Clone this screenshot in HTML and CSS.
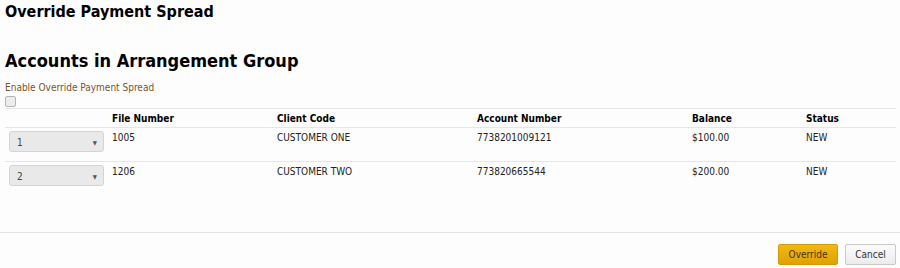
FILE: index.html
```html
<!DOCTYPE html>
<html>
<head>
<meta charset="utf-8">
<link rel="stylesheet" href="styles.css">
</head>
<body>
<div class="page">
  <h1 class="title">Override Payment Spread</h1>
  <h2 class="subtitle">Accounts in Arrangement Group</h2>
  <div class="label">Enable Override Payment Spread</div>
  <div class="check-row"><span class="checkbox"></span></div>
  <table class="grid">
    <thead>
      <tr>
        <th class="c-sel"></th>
        <th class="c-file">File Number</th>
        <th class="c-client">Client Code</th>
        <th class="c-acct">Account Number</th>
        <th class="c-bal">Balance</th>
        <th class="c-status">Status</th>
      </tr>
    </thead>
    <tbody>
      <tr>
        <td class="c-sel"><div class="select"><span>1</span><span class="arrow">▼</span></div></td>
        <td>1005</td>
        <td>CUSTOMER ONE</td>
        <td>7738201009121</td>
        <td>$100.00</td>
        <td>NEW</td>
      </tr>
      <tr>
        <td class="c-sel"><div class="select"><span>2</span><span class="arrow">▼</span></div></td>
        <td>1206</td>
        <td>CUSTOMER TWO</td>
        <td>773820665544</td>
        <td>$200.00</td>
        <td>NEW</td>
      </tr>
    </tbody>
  </table>
</div>
<div class="footer">
  <button class="btn btn-primary">Override</button>
  <button class="btn btn-default">Cancel</button>
</div>
</body>
</html>
```

FILE: styles.css
```css
html, body {
  margin: 0;
  padding: 0;
  background: #fdfdfd;
}
body {
  font-family: "DejaVu Sans Condensed", "DejaVu Sans", sans-serif;
  font-size: 10px;
  color: #222;
  width: 900px;
  height: 268px;
  overflow: hidden;
}
.page {
  padding: 0 4px 0 5px;
  height: 233px;
  border-bottom: 1px solid #e3e3e3;
  box-sizing: border-box;
}
.title {
  margin: 0;
  padding-top: 3px;
  font-size: 16px;
  line-height: 18px;
  font-weight: bold;
  color: #000;
}
.subtitle {
  margin: 29px 0 0;
  font-size: 18px;
  line-height: 22px;
  font-weight: bold;
  color: #000;
}
.label {
  margin-top: 9px;
  color: #7a5230;
  line-height: 13px;
}
.check-row {
  height: 12px;
  padding-top: 2px;
}
.checkbox {
  display: block;
  width: 9px;
  height: 9px;
  border: 1px solid #b5b5b5;
  border-radius: 2px;
  background: #ececec;
}
.grid {
  width: 891px;
  border-collapse: collapse;
  margin-top: 0;
}
.grid th, .grid td {
  text-align: left;
  vertical-align: top;
  padding: 0;
  border-top: 1px solid #e6e6e6;
}
.grid th {
  font-weight: bold;
  color: #000;
  height: 19px;
  padding-top: 4px;
  line-height: 12px;
  box-sizing: border-box;
}
.grid td {
  height: 34px;
  padding-top: 4px;
  line-height: 12px;
  box-sizing: border-box;
}
.c-sel { width: 107px; }
.c-file { width: 165px; }
.c-client { width: 200px; }
.c-acct { width: 215px; }
.c-bal { width: 114px; }
.grid td.c-sel {
  padding-top: 3px;
  padding-left: 4px;
}
.select {
  width: 95px;
  height: 21px;
  box-sizing: border-box;
  border: 1px solid #d4d4d4;
  border-radius: 3px;
  background: #e9e9e9;
  display: flex;
  align-items: center;
  justify-content: space-between;
  padding: 2px 6px 0 7px;
  color: #444;
}
.arrow {
  font-size: 6px;
  color: #555;
}
.footer {
  display: flex;
  justify-content: flex-end;
  gap: 7px;
  padding: 11px 4px 0 0;
}
.btn {
  font-family: "DejaVu Sans Condensed", "DejaVu Sans", sans-serif;
  font-size: 10px;
  height: 21px;
  border-radius: 2px;
  padding: 0;
  color: #333;
}
.btn-primary {
  width: 60px;
  background: linear-gradient(#f2b90f, #dfa105);
  border: 1px solid #d39a08;
  color: #4a3200;
}
.btn-default {
  width: 51px;
  background: linear-gradient(#fbfbfb, #ececec);
  border: 1px solid #c9c9c9;
}
```
